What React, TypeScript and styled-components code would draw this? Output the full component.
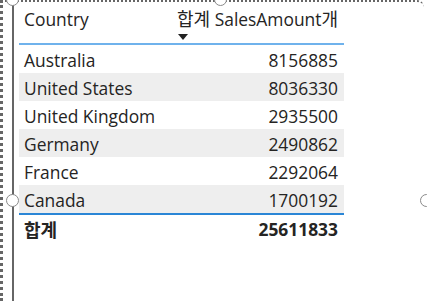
import React from "react";
import styled, { createGlobalStyle } from "styled-components";

const C = {
  text: "#252423",
  band: "#eeeeee",
  accent: "#6fb2ec",
  total: "#2a86d6",
  frame: "#666666",
  handle: "#8a8a8a",
};

const Global = createGlobalStyle`
  html, body { margin: 0; padding: 0; background: #fff; }
  body { font-family: "Open Sans", "Noto Sans CJK KR", sans-serif; color: ${C.text}; }
`;

/* 선택된 비주얼 바깥 점선 */
const Frame = styled.div`
  position: relative;
  width: 424px;
  height: 301px;
  box-sizing: border-box;
  border-left: 3px dotted ${C.frame};
  border-top: 2px dotted ${C.frame};
  border-top-right-radius: 7px;
  overflow: hidden;
`;

const Visual = styled.div`
  margin-left: 9px;
  height: 100%;
  border-left: 2px solid ${C.frame};
  padding: 0 0 0 5px;
  box-sizing: border-box;
`;

const Table = styled.div`
  width: 325px;
  display: grid;
  grid-template-columns: 1fr auto;
  grid-auto-rows: auto;
  font-size: 17.4px;
`;

const HeadCell = styled.div<{ $right?: boolean }>`
  height: 43px;
  padding: 7px ${(p) => (p.$right ? "6px" : "0")} 0 ${(p) => (p.$right ? "0" : "5px")};
  border-bottom: 2px solid ${C.accent};
  display: flex;
  justify-content: ${(p) => (p.$right ? "flex-end" : "flex-start")};
  line-height: 1.2;
  box-sizing: border-box;
  white-space: nowrap;
  overflow: visible;
`;

const HeadLabel = styled.span`
  position: relative;
`;

const SortArrow = styled.span`
  position: absolute;
  left: 1px;
  top: 25px;
  width: 0;
  height: 0;
  border-left: 5px solid transparent;
  border-right: 5px solid transparent;
  border-top: 6px solid #222;
`;

const Kr = styled.span`
  font-family: "Noto Sans CJK KR", sans-serif;
  font-size: 18px;
  line-height: 1;
`;

const Cell = styled.div<{ $band: boolean; $right?: boolean }>`
  height: 28px;
  display: flex;
  align-items: center;
  justify-content: ${(p) => (p.$right ? "flex-end" : "flex-start")};
  padding: ${(p) => (p.$right ? "1px 6px 0 0" : "1px 0 0 5px")};
  box-sizing: border-box;
  background: ${(p) => (p.$band ? C.band : "transparent")};
  white-space: nowrap;
`;

const TotalCell = styled.div<{ $right?: boolean }>`
  height: 29px;
  display: flex;
  align-items: center;
  justify-content: ${(p) => (p.$right ? "flex-end" : "flex-start")};
  padding: ${(p) => (p.$right ? "0 6px 0 0" : "0 0 0 5px")};
  box-sizing: border-box;
  border-top: 2px solid ${C.total};
  font-weight: 700;
`;

/* 크기 조절 핸들 */
const Handle = styled.span<{ $x: number; $y: number }>`
  position: absolute;
  left: ${(p) => p.$x - 6}px;
  top: ${(p) => p.$y - 6}px;
  width: 11px;
  height: 11px;
  border-radius: 50%;
  border: 1px solid ${C.handle};
  background: #fff;
`;

const rows: [string, number][] = [
  ["Australia", 8156885],
  ["United States", 8036330],
  ["United Kingdom", 2935500],
  ["Germany", 2490862],
  ["France", 2292064],
  ["Canada", 1700192],
];

export default function App() {
  return (
    <>
      <Global />
      <Frame>
        <Visual>
          <Table>
            <HeadCell>Country</HeadCell>
            <HeadCell $right>
              <HeadLabel>
                <Kr>합계</Kr> SalesAmount<Kr>개</Kr>
                <SortArrow />
              </HeadLabel>
            </HeadCell>
            {rows.map(([name, v], i) => (
              <React.Fragment key={name}>
                <Cell $band={i % 2 === 1}>{name}</Cell>
                <Cell $band={i % 2 === 1} $right>
                  {v}
                </Cell>
              </React.Fragment>
            ))}
            <TotalCell>
              <Kr>합계</Kr>
            </TotalCell>
            <TotalCell $right>25611833</TotalCell>
          </Table>
        </Visual>
      </Frame>
      <Handle $x={12} $y={-1} />
      <Handle $x={220} $y={-1} />
      <Handle $x={12} $y={200} />
      <Handle $x={426} $y={200} />
    </>
  );
}
